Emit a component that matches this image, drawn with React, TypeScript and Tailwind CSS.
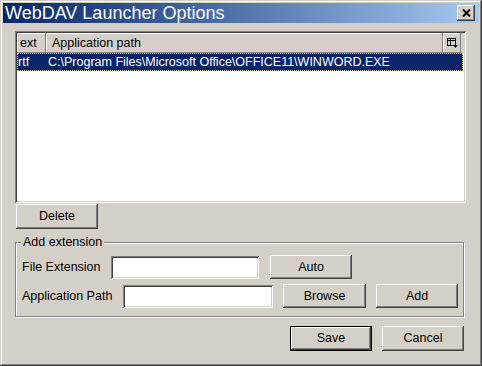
import clsx from 'clsx';

const raised =
  'shadow-[inset_-1px_-1px_#404040,inset_1px_1px_#fff,inset_-2px_-2px_#808080,inset_2px_2px_#d4d0c8]';
const sunken =
  'shadow-[inset_1px_1px_#808080,inset_-1px_-1px_#fff,inset_2px_2px_#404040,inset_-2px_-2px_#d4d0c8]';

const Btn = ({ label, def, w = 'w-[82px]', h = 'h-[25px]' }: { label: string; def?: boolean; w?: string; h?: string }) => (
  <div className={clsx('flex items-center justify-center bg-[#d4d0c8] shrink-0', w, h, def && 'border border-black')}>
    <div className={clsx('w-full h-full flex items-center justify-center', raised)}>{label}</div>
  </div>
);

const Field = ({ w }: { w: string }) => (
  <div className={clsx('h-[23px] bg-white shrink-0', w, sunken)} />
);

const App = () => {
  return (
    <div className="w-[482px] h-[366px] bg-[#d4d0c8] p-[3px] flex flex-col text-[12.5px] text-black font-['Liberation_Sans',Arial,sans-serif] shadow-[inset_-1px_-1px_#404040,inset_1px_1px_#d4d0c8,inset_-2px_-2px_#808080,inset_2px_2px_#fff]">
      {/* title bar */}
      <div className="h-[20px] flex items-center justify-between pl-[2px] pr-[4px] bg-linear-to-r from-[#0a246a] to-[#a6caf0]">
        <span className="text-white text-[18px] leading-none">WebDAV Launcher Options</span>
        <div className={clsx('w-[18px] h-[16px] bg-[#d4d0c8] flex items-center justify-center', raised)}>
          <svg width="9" height="8" viewBox="0 0 9 8">
            <path d="M1 0.5L8 7.5M8 0.5L1 7.5" stroke="#000" strokeWidth="2" />
          </svg>
        </div>
      </div>

      <div className="flex flex-col pl-[12px] pr-[13px] pt-[8px]">
        {/* list */}
        <div className={clsx('h-[172px] bg-white p-[2px] flex flex-col', sunken)}>
          <div className="h-[20px] flex bg-[#d4d0c8] shrink-0">
            <div className="w-[29px] flex items-center pl-[3px] shadow-[inset_-1px_-1px_#808080,inset_1px_1px_#fff]">ext</div>
            <div className="flex-1 flex items-center pl-[6px] shadow-[inset_-1px_-1px_#808080,inset_1px_1px_#fff]">Application path</div>
            <div className="w-[18px] flex items-center justify-center shadow-[inset_-1px_-1px_#808080,inset_1px_1px_#fff]">
              <svg width="11" height="10" viewBox="0 0 11 10">
                <rect x="0.5" y="0.5" width="8" height="7" fill="none" stroke="#000" />
                <line x1="0" y1="2.5" x2="9" y2="2.5" stroke="#000" />
                <line x1="3.5" y1="0" x2="3.5" y2="8" stroke="#000" />
                <path d="M6 7h5l-2.5 3z" fill="#000" />
              </svg>
            </div>
            <div className="w-[3px]" />
          </div>
          <div className="h-[18px] mr-[1px] flex items-center bg-[#0a246a] text-white border border-dotted border-[#d8d0a0]">
            <span className="w-[28px]">rtf</span>
            <span className="pl-[2px]">C:\Program Files\Microsoft Office\OFFICE11\WINWORD.EXE</span>
          </div>
        </div>

        <div className="mt-[1px] ml-[1px]">
          <Btn label="Delete" />
        </div>

        {/* group box */}
        <div className="relative mt-[13px] mr-[2px] h-[75px] border border-[#808080] shadow-[inset_1px_1px_#fff,1px_1px_#fff] pt-[12px] pl-[6px] flex flex-col gap-[5px]">
          <span className="absolute -top-[9px] left-[5px] px-[2px] bg-[#d4d0c8] leading-[16px]">Add extension</span>
          <div className="flex items-center h-[24px]">
            <span className="w-[89px] shrink-0">File Extension</span>
            <Field w="w-[148px]" />
            <div className="ml-[11px]">
              <Btn label="Auto" h="h-[24px]" />
            </div>
          </div>
          <div className="flex items-center h-[24px]">
            <span className="w-[101px] shrink-0">Application Path</span>
            <Field w="w-[150px]" />
            <div className="ml-[10px]">
              <Btn label="Browse" w="w-[83px]" h="h-[24px]" />
            </div>
            <div className="ml-[10px]">
              <Btn label="Add" h="h-[24px]" />
            </div>
          </div>
        </div>

        {/* dialog buttons */}
        <div className="mt-[9px] flex justify-end gap-[10px] pr-[2px]">
          <Btn label="Save" def />
          <Btn label="Cancel" />
        </div>
      </div>
    </div>
  );
};

export default App;
